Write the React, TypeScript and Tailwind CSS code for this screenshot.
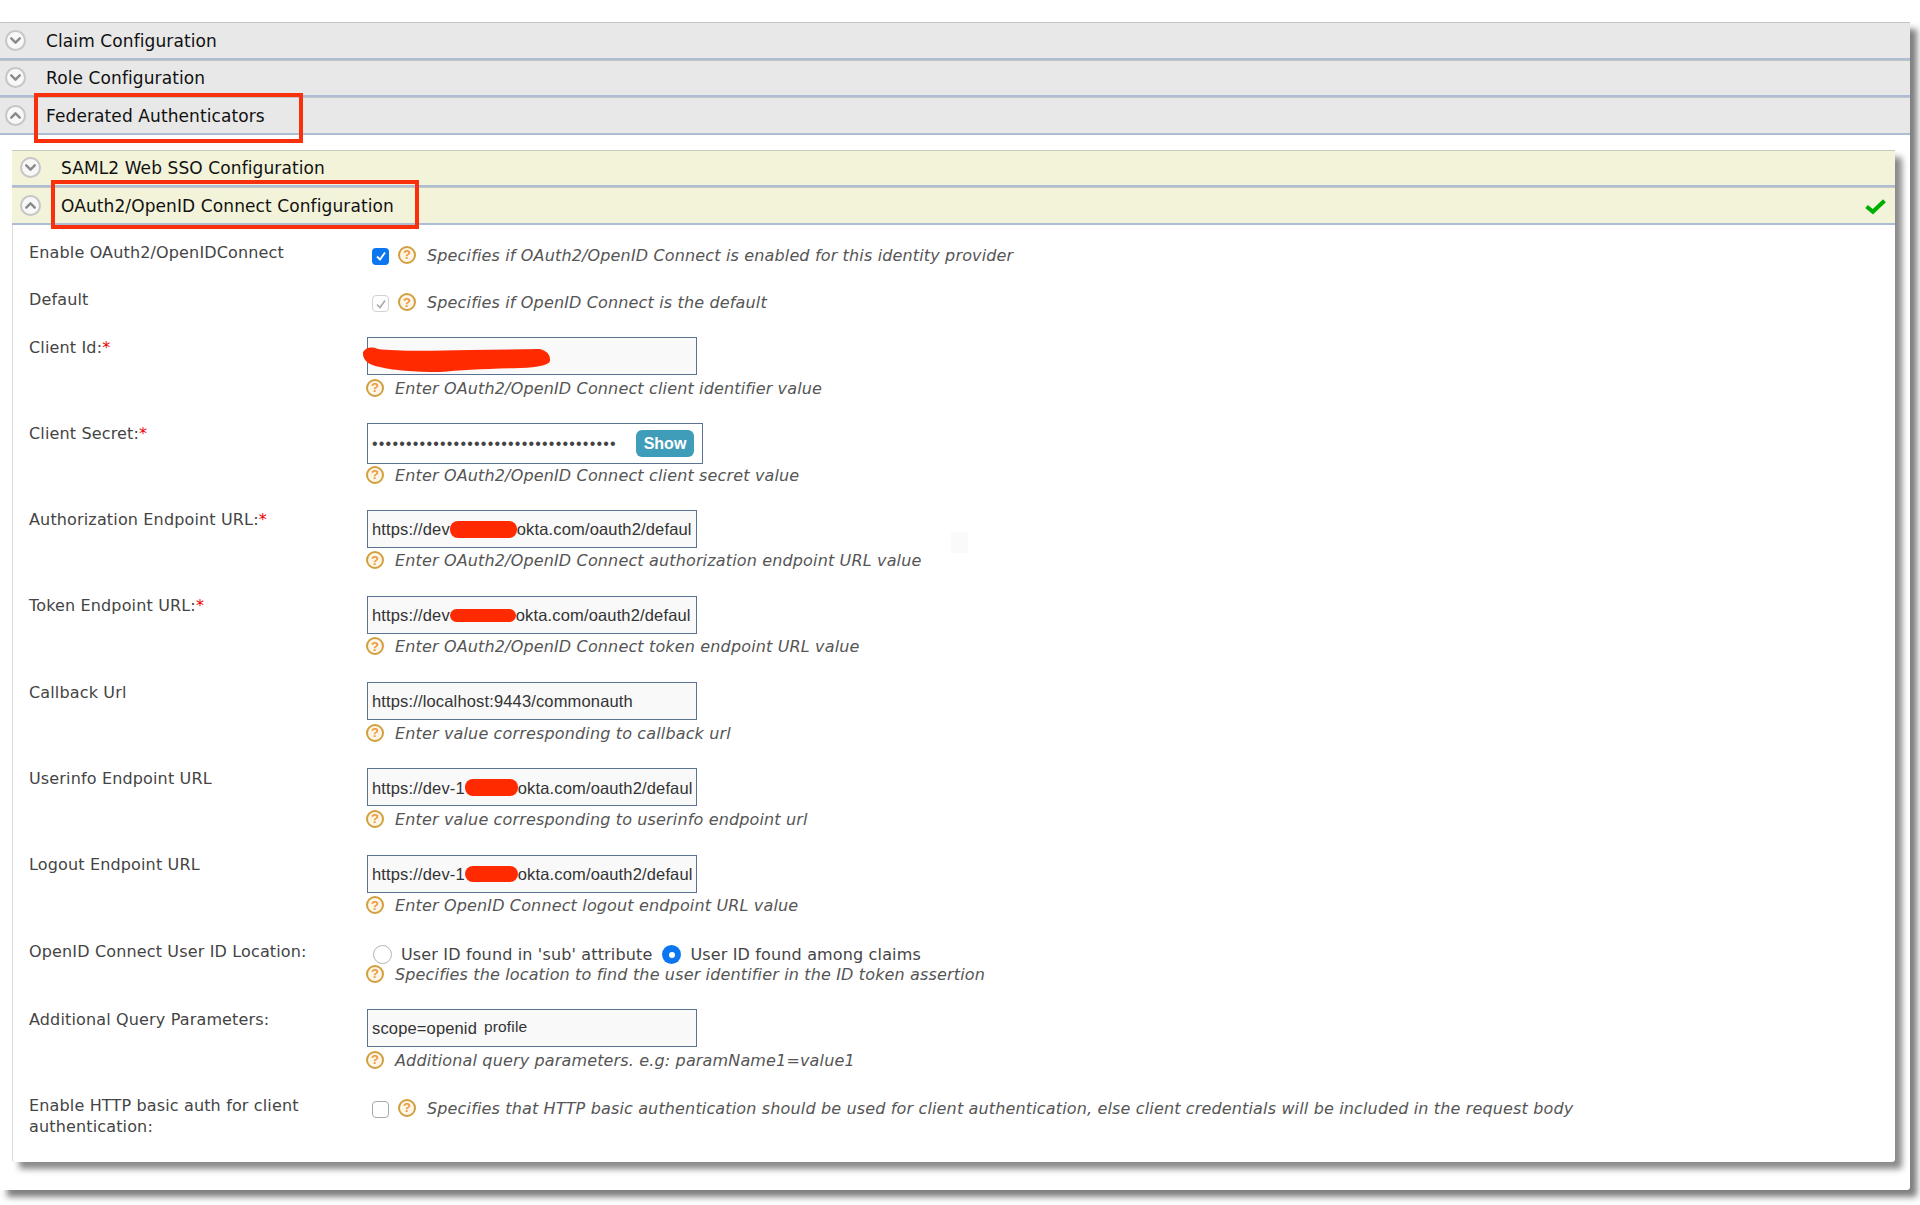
import { ChevronDown, ChevronUp } from "lucide-react";

const FONT = "font-['DejaVu_Sans',sans-serif]";
const INPUT_FONT = "font-['Liberation_Sans',sans-serif]";

function ToggleIcon({ open }: { open: boolean }) {
  const Icon = open ? ChevronUp : ChevronDown;
  return (
    <span className="flex h-[21px] w-[21px] items-center justify-center rounded-full border-2 border-[#c6c6c6] bg-[#f8f8f8]">
      <Icon className="h-[17px] w-[17px] text-[#8a8a8a]" strokeWidth={3.4} />
    </span>
  );
}

function HelpIcon() {
  return (
    <span className="-ml-px flex h-[18px] w-[18px] shrink-0 items-center justify-center rounded-full border-2 border-[#d0a040] bg-[#fdf6e6] font-['Liberation_Sans',sans-serif] text-[13px] leading-none font-bold text-[#ee9a3a]">
      ?
    </span>
  );
}

function Bar({ title, open, inner, check }: { title: string; open: boolean; inner?: boolean; check?: boolean }) {
  return (
    <div
      className={
        inner
          ? "flex h-[37.5px] items-center border-t border-b-2 border-t-[#c8c8c0] border-b-[#adbdd6] bg-[#f3f3da] pr-[9px] pl-[8px]"
          : "flex h-[37.5px] items-center border-t border-b-2 border-t-[#c4c4c4] border-b-[#adbdd6] bg-[#e8e8e8] pr-[8px] pl-[5px]"
      }
    >
      <ToggleIcon open={open} />
      <span className="ml-[20px] flex-1 pt-[2px] text-[17px] tracking-[0.1px] text-[#111]">{title}</span>
      {check && (
        <svg viewBox="0 0 20 16" className="mt-[2px] h-[17px] w-[21px]">
          <path d="M1.5 8 L7.5 13 L18.5 2.5" fill="none" stroke="#00b000" strokeWidth="4" />
        </svg>
      )}
    </div>
  );
}

function Scribble({ className }: { className: string }) {
  return <span className={"inline-block rounded-[8px] bg-[#ff2a00] " + className} />;
}

function Help({ text }: { text: string }) {
  return (
    <div className="flex items-start">
      <HelpIcon />
      <span className="ml-[11px] text-[16px] leading-5 tracking-[0.15px] text-[#555] italic">{text}</span>
    </div>
  );
}

function Label({ text, required }: { text: string; required?: boolean }) {
  return (
    <div className="w-[338px] shrink-0 pt-[9px] pr-[30px] text-[16px] leading-[21px] tracking-[0.15px] text-[#444]">
      {text}
      {required && <span className="text-[#e00]">*</span>}
    </div>
  );
}

function InputBox({ children }: { children?: React.ReactNode }) {
  return (
    <div
      className={
        "relative flex h-[38px] w-[330px] items-center overflow-hidden border-[1.5px] border-[#5b7391] bg-[#f9f9f9] pt-px pl-[4px] text-[16.5px] tracking-[0.15px] whitespace-nowrap text-[#333] " +
        INPUT_FONT
      }
    >
      {children}
    </div>
  );
}

function FieldRow({ label, required, help, children }: { label: string; required?: boolean; help: string; children: React.ReactNode }) {
  return (
    <div className="flex h-[86.3px]">
      <Label text={label} required={required} />
      <div className="pt-[9.5px]">
        {children}
        <div className="mt-[3.5px]">
          <Help text={help} />
        </div>
      </div>
    </div>
  );
}

function CheckRow({ label, help, state, tall }: { label: string; help: string; state: "on" | "disabled" | "off"; tall?: boolean }) {
  return (
    <div className={tall ? "flex h-[70px]" : "flex h-[47.5px]"}>
      <Label text={label} />
      <div className="flex items-start pt-[13px] pl-[5px]">
        {state === "on" && (
          <span className="mt-[2px] flex h-[17px] w-[17px] items-center justify-center rounded-[4px] bg-[#0b76f0]">
            <svg viewBox="0 0 12 12" className="h-[12px] w-[12px]">
              <path d="M2 6.5 L5 9.5 L10 2.5" fill="none" stroke="#fff" strokeWidth="1.8" />
            </svg>
          </span>
        )}
        {state === "disabled" && (
          <span className="mt-[2px] flex h-[17px] w-[17px] items-center justify-center rounded-[4px] border border-[#d2d2d2] bg-white">
            <svg viewBox="0 0 12 12" className="h-[12px] w-[12px]">
              <path d="M2 6.5 L5 9.5 L10 2.5" fill="none" stroke="#a8a8a8" strokeWidth="1.5" />
            </svg>
          </span>
        )}
        {state === "off" && <span className="mt-[2px] h-[17px] w-[17px] rounded-[4px] border border-[#a9a9a9] bg-white" />}
        <span className="ml-[10px]">
          <Help text={help} />
        </span>
      </div>
    </div>
  );
}

export default function App() {
  return (
    <div className={"relative h-[1205px] w-[1920px] overflow-hidden bg-white pt-[22px] " + FONT}>
      <div className="w-[1910px] rounded-br-[3px] bg-white pb-[28px] shadow-[7px_7px_6px_#7f7f7f]">
        <Bar title="Claim Configuration" open={false} />
        <Bar title="Role Configuration" open={false} />
        <Bar title="Federated Authenticators" open />

        <div className="mt-[15px] ml-[12px] w-[1883px] rounded-[3px] bg-white shadow-[7px_7px_6px_#8a8a8a]">
          <Bar title="SAML2 Web SSO Configuration" open={false} inner />
          <Bar title="OAuth2/OpenID Connect Configuration" open inner check />

          <div className="rounded-b-[3px] border-l border-[#ddd] pt-[8px] pb-[6px] pl-[16px]">
            <CheckRow label="Enable OAuth2/OpenIDConnect" state="on" help="Specifies if OAuth2/OpenID Connect is enabled for this identity provider" />
            <CheckRow label="Default" state="disabled" help="Specifies if OpenID Connect is the default" />

            <FieldRow label="Client Id:" required help="Enter OAuth2/OpenID Connect client identifier value">
              <InputBox />
            </FieldRow>
            <FieldRow label="Client Secret:" required help="Enter OAuth2/OpenID Connect client secret value">
              <div className={"-mb-[2px] flex h-[41px] w-[336px] items-center border-[1.5px] border-[#5b7391] bg-white pl-[4px] " + INPUT_FONT}>
                <span className="w-[248px] overflow-hidden text-[16px] tracking-[1.2px] whitespace-nowrap text-[#444]">
                  {"•".repeat(36)}
                </span>
                <span className="ml-[16px] flex h-[27px] w-[58px] items-center justify-center rounded-[6px] bg-[#409db9] text-[16px] font-bold text-white">
                  Show
                </span>
              </div>
            </FieldRow>
            <FieldRow label="Authorization Endpoint URL:" required help="Enter OAuth2/OpenID Connect authorization endpoint URL value">
              <InputBox>
                https://dev<Scribble className="h-[17px] w-[67px] shrink-0" />okta.com/oauth2/defaul
              </InputBox>
            </FieldRow>
            <FieldRow label="Token Endpoint URL:" required help="Enter OAuth2/OpenID Connect token endpoint URL value">
              <InputBox>
                https://dev<Scribble className="h-[13px] w-[66px] shrink-0" />okta.com/oauth2/defaul
              </InputBox>
            </FieldRow>
            <FieldRow label="Callback Url" help="Enter value corresponding to callback url">
              <InputBox>https://localhost:9443/commonauth</InputBox>
            </FieldRow>
            <FieldRow label="Userinfo Endpoint URL" help="Enter value corresponding to userinfo endpoint url">
              <InputBox>
                https://dev-1<Scribble className="h-[17px] w-[53px] shrink-0" />okta.com/oauth2/defaul
              </InputBox>
            </FieldRow>
            <FieldRow label="Logout Endpoint URL" help="Enter OpenID Connect logout endpoint URL value">
              <InputBox>
                https://dev-1<Scribble className="h-[16px] w-[53px] shrink-0" />okta.com/oauth2/defaul
              </InputBox>
            </FieldRow>

            <div className="flex h-[68px]">
              <Label text="OpenID Connect User ID Location:" />
              <div className="pt-[13px]">
                <div className="flex h-[20px] items-center pl-[6px] text-[16px] tracking-[0.15px] text-[#444]">
                  <span className="h-[19px] w-[19px] rounded-full border border-[#b5b5b5] bg-white" />
                  <span className="ml-[9px]">User ID found in 'sub' attribute</span>
                  <span className="ml-[10px] flex h-[19px] w-[19px] items-center justify-center rounded-full bg-[#0b76f0]">
                    <span className="h-[6px] w-[6px] rounded-full bg-white" />
                  </span>
                  <span className="ml-[9px]">User ID found among claims</span>
                </div>
                <Help text="Specifies the location to find the user identifier in the ID token assertion" />
              </div>
            </div>

            <FieldRow label="Additional Query Parameters:" help="Additional query parameters. e.g: paramName1=value1">
              <InputBox>
                scope=openid<span className="ml-[7px] -translate-y-[2px] text-[15.5px]">profile</span>
              </InputBox>
            </FieldRow>

            <CheckRow
              tall
              label="Enable HTTP basic auth for client authentication:"
              state="off"
              help="Specifies that HTTP basic authentication should be used for client authentication, else client credentials will be included in the request body"
            />
          </div>
        </div>
      </div>

      {/* annotations drawn over the screenshot */}
      <div className="pointer-events-none absolute top-[93px] left-[34px] h-[50px] w-[269px] border-4 border-[#f9300c]" />
      <div className="pointer-events-none absolute top-[180px] left-[51px] h-[49px] w-[368px] border-4 border-[#f9300c]" />
      <svg viewBox="362 345 190 28" className="absolute top-[345px] left-[362px] h-[28px] w-[190px]">
        <path
          d="M363 352 Q368 345 378 349 Q400 352 470 350 L540 349 Q551 352 550 361 Q548 367 520 368 Q470 369 440 372 Q400 372 380 367 Q362 364 363 352 Z"
          fill="#ff2a00"
        />
      </svg>
      <div className="absolute top-[532px] left-[951px] h-[21px] w-[17px] bg-[#fafafa]" />
    </div>
  );
}
